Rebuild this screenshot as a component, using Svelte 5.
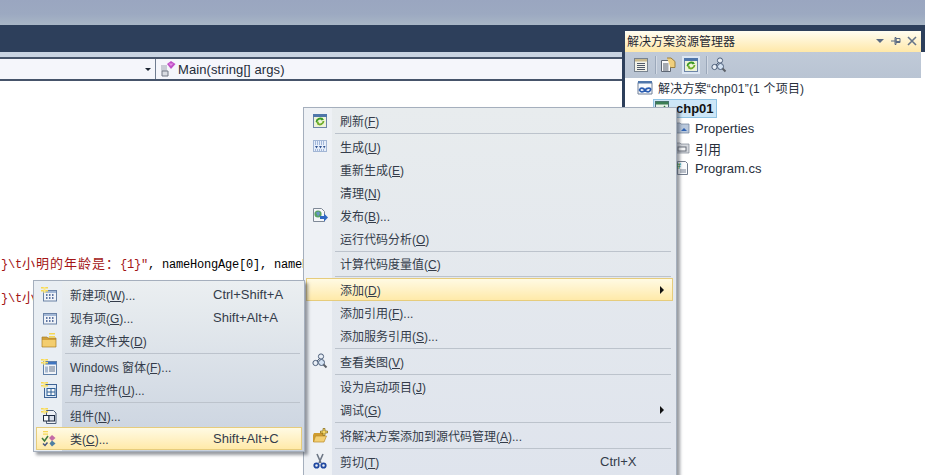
<script>
  const mainMenu = [
    { icon: 'refresh', label: '刷新', key: 'F', tail: ')' },
    { sep: true },
    { icon: 'build', label: '生成', key: 'U', tail: ')' },
    { label: '重新生成', key: 'E', tail: ')' },
    { label: '清理', key: 'N', tail: ')' },
    { icon: 'publish', label: '发布', key: 'B', tail: ')...' },
    { label: '运行代码分析', key: 'O', tail: ')' },
    { sep: true },
    { label: '计算代码度量值', key: 'C', tail: ')' },
    { sep: true },
    { label: '添加', key: 'D', tail: ')', hot: true, more: true },
    { label: '添加引用', key: 'F', tail: ')...' },
    { label: '添加服务引用', key: 'S', tail: ')...' },
    { sep: true },
    { icon: 'diagram', label: '查看类图', key: 'V', tail: ')' },
    { sep: true },
    { label: '设为启动项目', key: 'J', tail: ')' },
    { label: '调试', key: 'G', tail: ')', more: true },
    { sep: true },
    { icon: 'folderadd', label: '将解决方案添加到源代码管理', key: 'A', tail: ')...' },
    { sep: true },
    { icon: 'cut', label: '剪切', key: 'T', tail: ')', short: 'Ctrl+X' }
  ];
  const subMenu = [
    { icon: 'newitem', label: '新建项', key: 'W', tail: ')...', short: 'Ctrl+Shift+A' },
    { icon: 'existing', label: '现有项', key: 'G', tail: ')...', short: 'Shift+Alt+A' },
    { icon: 'newfolder', label: '新建文件夹', key: 'D', tail: ')' },
    { sep: true },
    { icon: 'form', label: 'Windows 窗体', key: 'F', tail: ')...' },
    { icon: 'control', label: '用户控件', key: 'U', tail: ')...' },
    { sep: true },
    { icon: 'component', label: '组件', key: 'N', tail: ')...' },
    { icon: 'class', label: '类', key: 'C', tail: ')...', short: 'Shift+Alt+C', hot: true }
  ];
</script>

{#snippet sparkle()}
  <path d="M0 0h7v1.500H0zM0 3h7v1.500H0z" fill="#f6d755" />
  <path d="M2.500 0H4.500v6H2.500z" fill="#fbe88a" />
{/snippet}

{#snippet icon(name)}
  <svg class="ico" viewBox="0 0 16 16" aria-hidden="true">
    {#if name === 'refresh'}
      <rect x="1.500" y="1.500" width="13" height="13" fill="#eef3d8" stroke="#6d85a8" />
      <rect x="1" y="1" width="14" height="3" fill="#4f76aa" />
      <path d="M4.500 9a3.500 3.500 0 0 1 6-2.400" fill="none" stroke="#3c9a24" stroke-width="1.800" />
      <path d="M11.500 8a3.500 3.500 0 0 1-6 2.400" fill="none" stroke="#6fae2a" stroke-width="1.800" />
      <path d="M10 4.500l2 2.500-3 .3z" fill="#3c9a24" />
      <path d="M6 11.500l-2-2.500 3-.3z" fill="#6fae2a" />
    {:else if name === 'build'}
      <rect x="1.500" y="2.500" width="13" height="11" fill="#e6eefa" stroke="#5a7db3" stroke-dasharray="1 1" />
      <path d="M3 4h10M3 6h10" stroke="#5e80b8" stroke-dasharray="1 1" />
      <path d="M3 8l1.500 2.500L6 8zM7 8l1.500 2.500L10 8zM11 8l1.200 2.500L13.500 8z" fill="#2f5290" />
      <path d="M3 12h10" stroke="#5e80b8" stroke-dasharray="1 1" />
    {:else if name === 'publish'}
      <path d="M1.500 1.500h8l3 3v10h-11z" fill="#f6f7f9" stroke="#7f8997" />
      <circle cx="6" cy="7" r="3.600" fill="#58a363" />
      <path d="M4 5.500l3-1 1 2-2 3z" fill="#6a94c9" />
      <path d="M8 9h4V6.500L16 10.500l-4 4V12H8z" fill="#2f68c2" />
    {:else if name === 'diagram'}
      <circle cx="9" cy="3.500" r="2.600" fill="#e8eef6" stroke="#4d5f7a" />
      <circle cx="3.500" cy="10" r="2.600" fill="#e8eef6" stroke="#4d5f7a" />
      <circle cx="9.500" cy="9.500" r="3" fill="#d3e2f3" stroke="#4d5f7a" />
      <path d="M7.500 5.500L5 8" stroke="#4d5f7a" />
      <path d="M11.500 11.500l3 3" stroke="#5b6068" stroke-width="2" />
    {:else if name === 'folderadd'}
      <path d="M1 7l1-2h9v9H1z" fill="#cf9c30" />
      <path d="M1.500 14l2-6h11l-2.500 6z" fill="#f3cf73" stroke="#b98b2a" stroke-width=".7" />
      <path d="M11 0.500h2v2.500h2.500v2H13v2.500h-2V5H8.500V3H11z" fill="#f5d76b" stroke="#7f6512" stroke-width=".7" />
    {:else if name === 'cut'}
      <path d="M5 1l4 9M11 1l-4 9" stroke="#6c7684" stroke-width="1.600" />
      <circle cx="4.500" cy="12.500" r="2.200" fill="none" stroke="#1f47a0" stroke-width="1.800" />
      <circle cx="11.500" cy="12.500" r="2.200" fill="none" stroke="#1f47a0" stroke-width="1.800" />
    {:else if name === 'newitem' || name === 'existing'}
      <rect x="2.500" y="3.500" width="13" height="10.500" fill="#f0f3f8" stroke="#6a82a6" />
      <rect x="3" y="4" width="12" height="2" fill="#a3b8d6" />
      <path d="M5 8h1.500M8 8h1.500M11 8h1.500M5 11h1.500M8 11h1.500M11 11h1.500" stroke="#2f4d86" stroke-width="1.500" />
      {#if name === 'newitem'}{@render sparkle()}{/if}
    {:else if name === 'newfolder'}
      <path d="M1 4h5l1 1h8v9H1z" fill="#cf9f3a" stroke="#a87f2c" stroke-width=".7" />
      <rect x="1.500" y="7" width="13" height="6.500" fill="#f3cd6e" />
      <path d="M8 0h6v1.500H8zM8 3h6v1.500H8z" fill="#f6d755" />
    {:else if name === 'form'}
      <rect x="2.500" y="2.500" width="13" height="13" fill="#f1f4f8" stroke="#6080a8" />
      <rect x="3" y="3" width="12" height="2.500" fill="#3f75c0" />
      <path d="M8 8h6M8 10h6M8 12h6" stroke="#5f7089" />
      <rect x="4" y="7.500" width="3" height="6" fill="#a9bad0" />
      {@render sparkle()}
    {:else if name === 'control'}
      <rect x="3.500" y="2.500" width="12" height="13" fill="#dfeaf6" stroke="#3f6496" />
      <rect x="6" y="6.500" width="8" height="7" fill="#f7f9fb" stroke="#2f6096" />
      <path d="M6 10h8M10 6.500v7" stroke="#2f6096" />
      {@render sparkle()}
    {:else if name === 'component'}
      <path d="M5.500 2.500h7l2.500 2.500v10.500h-9.500z" fill="#eef1f6" stroke="#4f5f78" />
      <rect x="2.500" y="7.500" width="5.500" height="5.500" fill="#f8f9fb" stroke="#1f2b40" />
      <rect x="8" y="7.500" width="5.500" height="5.500" fill="#d9e0ec" stroke="#1f2b40" />
      {@render sparkle()}
    {:else if name === 'class'}
      <path d="M1 7l2.500 3L7 5" fill="none" stroke="#3f7a3e" stroke-width="1.500" />
      <path d="M2 12.500l2 2 2.500-3" fill="none" stroke="#46557f" stroke-width="1.500" />
      <path d="M8 7l3-3 3.500 3-3.500 3z" fill="#c46aa6" />
      <path d="M8.500 12.500l2.500-3 3.500 3-3.500 3z" fill="#4f7fa3" />
      <path d="M2 0h5v1.300H2zM2 2.500h5v1.300H2z" fill="#f6d755" />
    {:else if name === 'propsheet'}
      <rect x="1.500" y="1.500" width="13" height="13" fill="#f2f2ea" stroke="#78838f" />
      <rect x="2" y="2" width="12" height="2.500" fill="#c9b98c" />
      <path d="M4 6.500h8M4 8.500h8M4 10.500h8M4 12.500h8" stroke="#4f5968" />
    {:else if name === 'allfiles'}
      <path d="M1.500 3.500h7l2 2v9h-9z" fill="#fafafa" stroke="#5e6774" />
      <path d="M3 7h5.500M3 9h5.500M3 11h5.500M3 13h5.500" stroke="#4f5968" />
      <path d="M7 1h4l4 3.500v6h-4.500" fill="#f0cf7c" stroke="#9c8040" />
    {:else if name === 'solution'}
      <path d="M1 3.500h14v11.500H1z" fill="#f8fafc" stroke="#6e7f98" />
      <rect x="1" y="2" width="14" height="2.500" fill="#4f76aa" />
      <path d="M2.500 11c1-2.500 3.500-2.500 5.500 0s4.500 2.500 5.500 0-3.500-2.500-5.500 0-4.500 2.500-5.500 0z" fill="none" stroke="#2a5cb0" stroke-width="1.800" />
    {:else if name === 'project'}
      <rect x="1.500" y="1.500" width="13" height="13" fill="#e9f3e9" stroke="#4f6a7c" />
      <rect x="1.500" y="1.500" width="13" height="3" fill="#3c7e55" />
      <path d="M4 11l2-3 2 2 3-4" fill="none" stroke="#2e7c3b" stroke-width="1.300" />
    {:else if name === 'props'}
      <path d="M1 3h5l1 1h8v9H1z" fill="#b9c8dc" stroke="#6d7f9a" stroke-width=".7" />
      <path d="M7 11l3-3 3 3z" fill="#2f62b3" />
    {:else if name === 'refs'}
      <path d="M1 3h5l1 1h8v9H1z" fill="#d5d8dd" stroke="#7d8490" stroke-width=".7" />
      <rect x="4" y="7" width="8" height="4" fill="#f5f6f7" stroke="#666d78" />
    {:else if name === 'cs'}
      <path d="M3.500 1.500h8l2 2v11h-10z" fill="#fafbfd" stroke="#727d8e" />
      <path d="M6 10h6M6 12h6" stroke="#7a8597" />
      <text class="hash" x="2" y="9">#</text>
    {:else if name === 'method'}
      <path d="M1 5h6M1 7h6M1 9h6" stroke="#9aa1ad" />
      <path d="M2 10h6v5H2z" fill="#d9dce2" stroke="#747b86" />
      <path d="M7 3l4-3 4.500 3-4.500 5z" fill="#c04fc6" />
      <path d="M8.500 2.500h5l-2.500 2.500z" fill="#e48fe6" />
    {/if}
  </svg>
{/snippet}

{#snippet menu(items, cls)}
  <div class="menu {cls}">
    {#each items as it}
      {#if it.sep}
        <div class="sep"></div>
      {:else}
        <div class="item" class:hot={it.hot}>
          <span class="gutter">{#if it.icon}{@render icon(it.icon)}{/if}</span>
          <span class="label">{it.label}(<u>{it.key}</u>{it.tail}</span>
          {#if it.short}<span class="short">{it.short}</span>{/if}
          {#if it.more}<span class="arrow"></span>{/if}
        </div>
      {/if}
    {/each}
  </div>
{/snippet}

<div class="app">
  <div class="titlebar"></div>
  <div class="workspace">
    <div class="left">
      <div class="band"></div>
      <div class="strip"></div>
      <div class="nav">
        <div class="nav-left"><span class="drop"></span></div>
        <div class="nav-right">{@render icon('method')}<span>Main(string[] args)</span></div>
      </div>
      <div class="editor">
        <div class="code"><span class="str">&#125;\t<span class="cjk">小明的年龄是：</span>&#123;1&#125;"</span>, nameHongAge[0], nameH</div>
        <div class="code"><span class="str">&#125;\t<span class="cjk">小</span></span></div>
      </div>
    </div>
    <aside class="panel">
      <header class="ptitle">
        <span>解决方案资源管理器</span>
        <span class="pbtns">
          <svg class="pb" viewBox="0 0 12 12"><path d="M2 4h8L6 8z" fill="#5a6a82" /></svg>
          <svg class="pb" viewBox="0 0 12 12"><path d="M1 6h4M5 2.500h1v7H5zM6 3.500h4v4H6zM6 6.500h4" fill="none" stroke="#5a6a82" /></svg>
          <svg class="pb" viewBox="0 0 12 12"><path d="M2 2l8 8M10 2l-8 8" stroke="#66758a" stroke-width="1.600" /></svg>
        </span>
      </header>
      <div class="ptools">
        {@render icon('propsheet')}
        <i class="tsep"></i>
        {@render icon('allfiles')}
        <span class="tactive">{@render icon('refresh')}</span>
        <i class="tsep"></i>
        {@render icon('diagram')}
      </div>
      <div class="tree">
        <div class="row l0">{@render icon('solution')}<span>解决方案“chp01”(1 个项目)</span></div>
        <div class="row l1"><span class="sel">{@render icon('project')}<b>chp01</b></span></div>
        <div class="row l2">{@render icon('props')}<span>Properties</span></div>
        <div class="row l2">{@render icon('refs')}<span>引用</span></div>
        <div class="row l2">{@render icon('cs')}<span>Program.cs</span></div>
      </div>
    </aside>
  </div>
  {@render menu(mainMenu, 'main')}
  {@render menu(subMenu, 'sub')}
</div>

<style>
  :global(body) { margin: 0; background: #fff; }
  .app {
    position: relative;
    width: 925px;
    height: 475px;
    overflow: hidden;
    display: flex;
    flex-direction: column;
    font-family: "Liberation Sans", "Noto Sans CJK SC", sans-serif;
    font-size: 12px;
    color: #28303c;
  }
  .titlebar {
    height: 25px;
    flex: none;
    background: linear-gradient(#9aa6c0 0, #9ca9c1 14px, #a8b6c6 25px);
  }
  .workspace {
    flex: 1;
    display: flex;
    min-height: 0;
    background: linear-gradient(#2d3f5b 0 27px, #fff 27px);
  }
  .left {
    width: 622px;
    flex: none;
    display: flex;
    flex-direction: column;
    border-right: 3px solid #2d3f5b;
  }
  .band { height: 27px; flex: none; background: #2d3f5b; }
  .strip { height: 5px; flex: none; background: #c8d3e1; }
  .nav {
    height: 20px;
    flex: none;
    display: flex;
    background: #f5f6fb;
    border-top: 2px solid #46546a;
    border-bottom: 2px solid #46546a;
  }
  .nav-left {
    width: 156px;
    flex: none;
    display: flex;
    align-items: center;
    justify-content: flex-end;
    padding-right: 3px;
    box-sizing: border-box;
    border-right: 1px solid #6f7c90;
  }
  .drop {
    border-left: 3px solid transparent;
    border-right: 3px solid transparent;
    border-top: 3px solid #1d2633;
    margin-right: 1px;
  }
  .nav-right {
    display: flex;
    align-items: center;
    gap: 2px;
    padding-left: 4px;
    font-size: 13px;
    letter-spacing: .1px;
    color: #232b38;
  }
  .editor {
    flex: 1;
    padding-top: 165px;
    background: #fff;
    overflow: hidden;
  }
  .code {
    height: 34px;
    line-height: 34px;
    padding-left: 1px;
    white-space: nowrap;
    font-family: "Liberation Mono", "Noto Sans CJK SC", monospace;
    font-size: 12px;
    letter-spacing: -.2px;
    color: #000;
  }
  .str { color: #a31515; }
  .cjk { font-size: 13px; letter-spacing: 1px; font-family: "Noto Sans CJK SC", sans-serif; }
  .panel {
    width: 296px;
    flex: none;
    margin-top: 6px;
    display: flex;
    flex-direction: column;
    background: #fff;
  }
  .ptitle {
    height: 21px;
    flex: none;
    box-sizing: border-box;
    display: flex;
    align-items: center;
    justify-content: space-between;
    padding: 0 3px 2px 2px;
    border-radius: 2px 2px 0 0;
    background: linear-gradient(#fffdf2, #ffe8a8);
    color: #1f2733;
  }
  .pbtns { display: flex; gap: 4px; }
  .pb { width: 12px; height: 12px; }
  .ptools {
    height: 26px;
    flex: none;
    display: flex;
    align-items: center;
    gap: 5px;
    padding-left: 8px;
    background: linear-gradient(#c0cad8, #b9c4d3);
  }
  .tsep { width: 1px; height: 18px; background: #9ba8ba; margin: 0 -1px 0 1px; box-shadow: 1px 0 #d3dae5; }
  .tactive { display: flex; padding: 1px; margin-left: 1px; background: #dce6f3; }
  .tree { font-size: 12px; }
  .row { height: 20px; box-sizing: border-box; display: flex; align-items: center; gap: 5px; }
  .l0 { padding-left: 12px; padding-bottom: 2px; letter-spacing: .2px; }
  .l1 { padding-left: 28px; }
  .l2 { padding-left: 49px; font-size: 13px; }
  .sel {
    display: flex;
    align-items: center;
    gap: 6px;
    height: 17px;
    padding-right: 2px;
    background: #cde6f7;
    border: 1px solid #8fc3e3;
    font-size: 13px;
    color: #111;
  }
  .ico { width: 16px; height: 16px; flex: none; display: block; }
  .hash { font: bold 9px "Liberation Sans", sans-serif; fill: #2f8f2f; }
  .menu {
    position: absolute;
    box-sizing: border-box;
    border: 1px solid #a5afbd;
    padding: 2px;
    box-shadow: 3px 3px 3px rgba(70, 75, 85, .55);
    color: #343c4a;
  }
  .main {
    left: 303px;
    top: 107px;
    width: 374px;
    height: 372px;
    padding: 1px 3px 2px 2px;
    background: linear-gradient(90deg, #eef1f5 0 28px, transparent 28px), linear-gradient(#e8ecee, #dfe4ed);
  }
  .sub {
    left: 33px;
    top: 280px;
    width: 272px;
    height: 172px;
    background: linear-gradient(90deg, #e9eef3 0 28px, transparent 28px), linear-gradient(#ebeff1, #c9d2df);
  }
  .item {
    height: 23px;
    display: flex;
    align-items: center;
    position: relative;
    white-space: nowrap;
    box-sizing: border-box;
  }
  .hot {
    background: linear-gradient(#fffbe6, #fff1c4 55%, #ffe9a6);
    outline: 1px solid #e6cc7c;
    outline-offset: -1px;
  }
  .gutter {
    width: 33px;
    flex: none;
    display: flex;
    justify-content: center;
    padding-right: 6px;
    box-sizing: border-box;
  }
  .sub .gutter { padding-right: 7px; }
  .label { padding-left: 1px; }
  u { text-underline-offset: 1px; }
  .short { position: absolute; left: 177px; font-size: 13px; }
  .main .short { left: 294px; }
  .arrow {
    position: absolute;
    right: 9px;
    border-top: 4px solid transparent;
    border-bottom: 4px solid transparent;
    border-left: 4px solid #111;
  }
  .sep {
    height: 1px;
    margin: 1px 2px 1px 29px;
    background: #bcc3cc;
  }
  .main .sep { margin-bottom: .7px; }
</style>
